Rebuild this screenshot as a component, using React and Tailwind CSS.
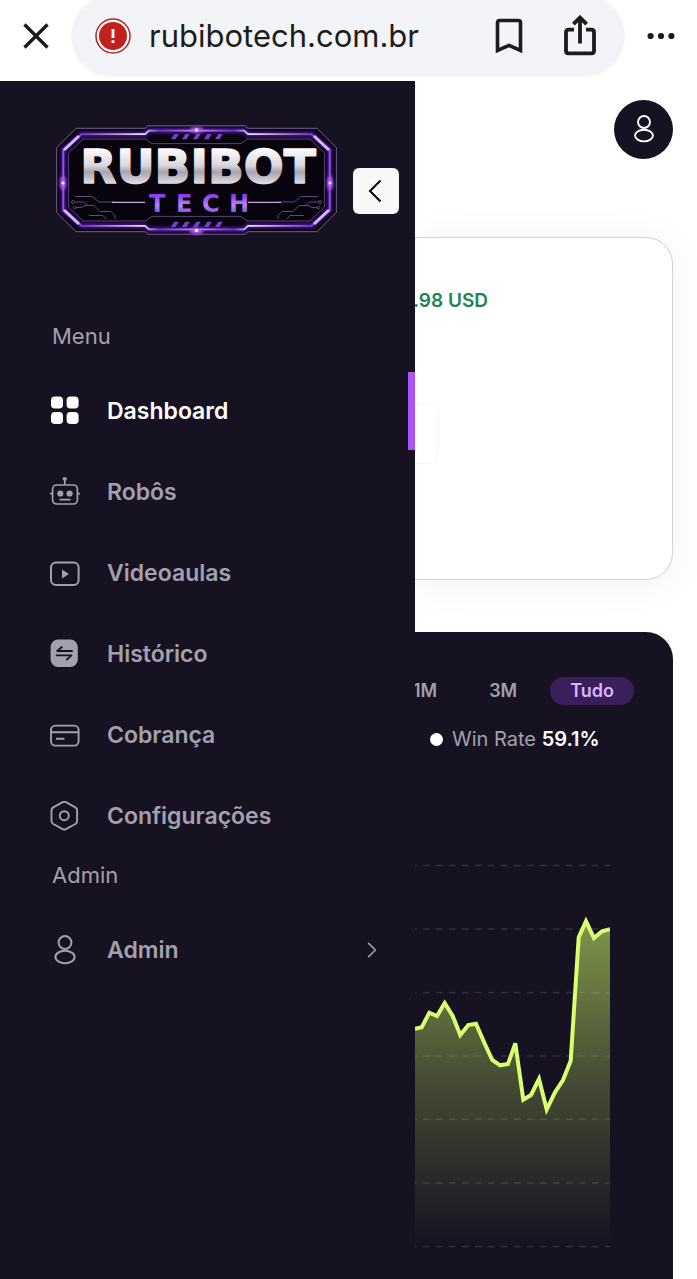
import React from "react";

const ICON = "h-[30px] w-[30px] shrink-0";

function UserIcon({ className }) {
  return (
    <svg viewBox="0 0 30 30" className={className} fill="none" stroke="currentColor" strokeWidth="2" aria-hidden="true">
      <circle cx="15" cy="7.5" r="6.4" />
      <ellipse cx="15" cy="22" rx="9.6" ry="6.2" />
    </svg>
  );
}

function DashboardIcon() {
  return (
    <svg viewBox="0 0 30 30" className={ICON} fill="currentColor" aria-hidden="true">
      <rect x="1" y="0.5" width="12" height="12" rx="3.8" />
      <rect x="16.6" y="0.5" width="12" height="12" rx="3.8" />
      <rect x="1" y="16" width="12" height="12" rx="3.8" />
      <rect x="16.6" y="16" width="12" height="12" rx="3.8" />
    </svg>
  );
}

function RobotIcon() {
  return (
    <svg viewBox="0 0 30 30" className={ICON} fill="none" stroke="currentColor" strokeWidth="1.7" aria-hidden="true">
      <rect x="2.6" y="8" width="24.8" height="19" rx="4" />
      <path d="M14.8 8V2M0 16.6h2.200M27.700 16.600h2.200M9.500 22.600h11" />
      <rect x="12.8" y="0.2" width="4" height="3.4" rx="1" fill="currentColor" stroke="none" />
      <circle cx="10.3" cy="16.500" r="3.100" fill="currentColor" stroke="none" />
      <circle cx="19.6" cy="16.500" r="3.100" fill="currentColor" stroke="none" />
    </svg>
  );
}

function VideoIcon() {
  return (
    <svg viewBox="0 0 30 30" className={ICON} fill="none" stroke="currentColor" strokeWidth="2" aria-hidden="true">
      <rect x="1" y="4.600" width="27.6" height="22.4" rx="5" />
      <path d="M12 11.400v9l7-4.500z" fill="currentColor" stroke="none" />
    </svg>
  );
}

function HistoryIcon() {
  return (
    <svg viewBox="0 0 30 30" className={ICON} fill="none" aria-hidden="true">
      <rect x="0.6" y="0.500" width="27.2" height="27.4" rx="7.4" fill="currentColor" />
      <path d="M22 12H7.200l4.600-4M6.600 16.400h14.800l-4.600 4.200" stroke="#171222" strokeWidth="1.9" strokeLinecap="round" strokeLinejoin="round" />
    </svg>
  );
}

function CardIcon() {
  return (
    <svg viewBox="0 0 30 30" className={ICON} fill="none" stroke="currentColor" strokeWidth="1.9" aria-hidden="true">
      <rect x="1" y="5.600" width="27.6" height="20" rx="4.4" />
      <path d="M1 12.200h27.600M6 18.800h8.400" />
    </svg>
  );
}

function SettingsIcon() {
  return (
    <svg viewBox="0 0 30 30" className={ICON} fill="none" stroke="currentColor" strokeWidth="1.9" strokeLinejoin="round" aria-hidden="true">
      <path d="M12.700 1.200q1.600-.9 3.200 0l9.500 5.200q1.700 1 1.700 2.900v10.800q0 1.900-1.700 2.900l-9.500 5.200q-1.600.9-3.200 0l-9.500-5.200q-1.700-1-1.700-2.900V9.300q0-1.900 1.700-2.900z" />
      <circle cx="14.3" cy="14.700" r="4.5" />
    </svg>
  );
}

const menu = [
  { label: "Dashboard", icon: <DashboardIcon />, active: true },
  { label: "Robôs", icon: <RobotIcon /> },
  { label: "Videoaulas", icon: <VideoIcon /> },
  { label: "Histórico", icon: <HistoryIcon /> },
  { label: "Cobrança", icon: <CardIcon /> },
  { label: "Configurações", icon: <SettingsIcon /> },
];

function NavItem({ label, icon, active, expandable }) {
  return (
    <li>
      <a
        href="#"
        className={
          "flex h-[78px] items-center gap-[27px] pl-[50px] text-[23px] leading-9 font-semibold " +
          (active ? "border-r-[7px] border-[#a855f7] text-white" : "text-[#a3a0ae]")
        }
      >
        {icon}
        <span className="flex-1">{label}</span>
        {expandable && (
          <svg viewBox="0 0 10 16" className="mr-[38px] h-4 w-[10px]" fill="none" stroke="currentColor" strokeWidth="1.6" strokeLinecap="round" strokeLinejoin="round" aria-hidden="true">
            <path d="M1.6 1.4 8.4 8l-6.8 6.6" />
          </svg>
        )}
      </a>
    </li>
  );
}

function Corner() {
  return (
    <g fill="none">
      <path d="M4.7 58V25.7L24 6.3h69l3-2.5h48.5" stroke="#6f618c" strokeWidth="1" />
      <path d="M11.3 58V28L29.5 12.2H93l4-3.6h47.5" stroke="#7c22ff" strokeWidth="5" opacity="0.55" filter="url(#glow)" />
      <path d="M11.3 58V28L29.5 12.2H93l4-3.6h47.5" stroke="url(#frame)" strokeWidth="1.8" />
      <path d="M12 28 27 14" stroke="#d9b4ff" strokeWidth="3" />
      <path d="M16.6 58V31L31 17h63l6 4.6h44.5" stroke="#57457a" strokeWidth="1" />
    </g>
  );
}

function Circuit() {
  return (
    <g fill="none" stroke="#5b4a7e" strokeWidth="1">
      <path d="M23 74.5h17l7 5.5h16M24 85.5h5l4-2h9l6 6h11l4 4v3.5M37 93.5h14l3 3.5M22.5 80h9l4 3.5" />
      <circle cx="21" cy="80" r="1.5" />
      <circle cx="22.6" cy="85.6" r="1.4" />
      <path d="M60 80.3h33" stroke="#c4a5e8" strokeWidth="1.2" />
    </g>
  );
}

function Logo() {
  return (
    <svg viewBox="0 0 288 116" className="h-[116px] w-[288px] shrink-0" role="img" aria-label="Rubibot Tech">
      <defs>
        <linearGradient id="frame" gradientUnits="userSpaceOnUse" x1="11" y1="0" x2="144.5" y2="0">
          <stop offset="0" stopColor="#9a50f0" />
          <stop offset="0.16" stopColor="#7a3acc" />
          <stop offset="0.35" stopColor="#9f8bb5" />
          <stop offset="0.6" stopColor="#f2e4ff" />
          <stop offset="0.72" stopColor="#6f30bd" />
          <stop offset="1" stopColor="#cf8cff" />
        </linearGradient>
        <linearGradient id="silver" x1="0" y1="0" x2="0" y2="1">
          <stop offset="0.15" stopColor="#ffffff" />
          <stop offset="0.48" stopColor="#dad7de" />
          <stop offset="0.6" stopColor="#a8a3b0" />
          <stop offset="0.82" stopColor="#e2dfe7" />
        </linearGradient>
        <linearGradient id="violet" x1="0" y1="0" x2="0" y2="1">
          <stop offset="0.2" stopColor="#8b3ff0" />
          <stop offset="0.55" stopColor="#b485ee" />
          <stop offset="0.85" stopColor="#8746e0" />
        </linearGradient>
        <filter id="glow" x="-30%" y="-30%" width="160%" height="160%">
          <feGaussianBlur stdDeviation="1.8" />
        </filter>
      </defs>
      <path d="M5 26 24 7h70l3-3h95l3 3h70l19 19v64l-19 19h-70l-3 3H97l-3-3H24L5 90z" fill="#07040d" />
      <Corner />
      <g transform="matrix(-1 0 0 1 289 0)"><Corner /></g>
      <g transform="matrix(1 0 0 -1 0 116)"><Corner /></g>
      <g transform="matrix(-1 0 0 -1 289 116)"><Corner /></g>
      <g fill="#7440cc">
        {[119, 130, 141, 152, 163].map((x) => (
          <React.Fragment key={x}>
            <path d={`M${x} 17.2l3.2-5.2h4.6l-3.2 5.2z`} />
            <path d={`M${x} 105l3.2-5.2h4.6l-3.2 5.2z`} />
          </React.Fragment>
        ))}
      </g>
      <Circuit />
      <g transform="matrix(-1 0 0 1 289 0)"><Circuit /></g>
      <g fill="#b45cff" filter="url(#glow)">
        <ellipse cx="144.5" cy="8" rx="7" ry="3" />
        <ellipse cx="144.5" cy="109" rx="7" ry="3" />
        <ellipse cx="11" cy="61" rx="3" ry="7" />
        <ellipse cx="278" cy="61" rx="3" ry="7" />
      </g>
      <g fill="#f8e8ff">
        <circle cx="144.5" cy="8" r="1.8" />
        <circle cx="144.5" cy="108.5" r="1.8" />
        <circle cx="11" cy="61" r="1.6" />
        <circle cx="278" cy="61" r="1.6" />
      </g>
      <text x="146" y="61" textAnchor="middle" fill="url(#silver)" stroke="url(#silver)" strokeWidth="1.6" strokeLinejoin="round" className="font-['DejaVu_Sans',sans-serif] text-[47px] font-bold">RUBIBOT</text>
      <text x="97 124 150 177" y="90" fill="url(#violet)" className="font-['DejaVu_Sans',sans-serif] text-[24px] font-bold">TECH</text>
    </svg>
  );
}

const points =
  "0,173.7 6.7,172.3 14.3,157.7 22,161 29.7,148 37.7,161 45.3,180 53.3,170 61,168.7 69.3,187.7 77.3,205 85,210.3 93,209 100.3,188.3 108.3,244.7 116,240 124,224 131.7,254.5 140,237.3 148,225 155.7,205.7 163.7,82.3 171,66.3 179,83 187,76.3 195,74.3";

function Chart() {
  return (
    <svg viewBox="0 0 195 402" preserveAspectRatio="none" className="h-[402px] w-full" role="img" aria-label="Equity">
      <defs>
        <linearGradient id="area" gradientUnits="userSpaceOnUse" x1="0" y1="64" x2="0" y2="391">
          <stop offset="0" stopColor="#d4ff6a" stopOpacity="0.56" />
          <stop offset="0.5" stopColor="#d4ff6a" stopOpacity="0.24" />
          <stop offset="1" stopColor="#d4ff6a" stopOpacity="0" />
        </linearGradient>
      </defs>
      <g stroke="#ffffff" strokeOpacity="0.13" strokeWidth="1.4" strokeDasharray="6.5 6.5">
        {[10.5, 74, 137.5, 201, 264.3, 328, 391.5].map((y) => (
          <path key={y} d={`M-5 ${y}H195`} />
        ))}
      </g>
      <polygon points={`${points} 195,391 0,391`} fill="url(#area)" />
      <polyline points={points} fill="none" stroke="#d7ff70" strokeWidth="4" />
    </svg>
  );
}

function BrowserBar() {
  return (
    <header className="flex h-[81px] items-start overflow-hidden bg-white text-[#1c1c1e]">
      <button type="button" aria-label="Fechar" className="flex h-[72px] w-[71px] items-center justify-center">
        <svg viewBox="0 0 26 26" className="h-[26px] w-[26px]" stroke="currentColor" strokeWidth="3.4" aria-hidden="true">
          <path d="M1.5 1.5l23 23M24.5 1.5l-23 23" />
        </svg>
      </button>
      <div className="-mt-[5px] flex h-[82px] min-w-0 flex-1 items-center rounded-full bg-[#f3f4f7] pr-[29px] pl-6">
        <svg viewBox="0 0 36 36" className="h-9 w-9 shrink-0" aria-hidden="true">
          <circle cx="18" cy="18" r="17" fill="#fff" stroke="#b9282a" strokeWidth="1.5" />
          <circle cx="18" cy="18" r="14" fill="#c1201d" />
          <path d="M18 11v9M18 22.3v2.8" stroke="#fff" strokeWidth="2.8" />
        </svg>
        <input
          aria-label="Endereço"
          readOnly
          value="rubibotech.com.br"
          className="ml-[18px] min-w-0 flex-1 bg-transparent text-[31px] leading-10 outline-none"
        />
        <button type="button" aria-label="Favoritos">
          <svg viewBox="0 0 28 36" className="h-9 w-7" fill="none" stroke="currentColor" strokeWidth="3.6" aria-hidden="true">
            <path d="M2.5 32.4V4.8Q2.5 2.5 4.8 2.5h18.4q2.3 0 2.3 2.3v27.6L14 27.4z" />
          </svg>
        </button>
        <button type="button" aria-label="Compartilhar" className="ml-[41px]">
          <svg viewBox="0 0 32 42" className="h-[42px] w-8" fill="none" stroke="currentColor" strokeWidth="3.8" aria-hidden="true">
            <path d="M10 14.6H4.6q-2.600 0-2.600 2.600v18.600q0 2.600 2.600 2.600h22.800q2.600 0 2.600-2.600V17.200q0-2.600-2.600-2.600H22" />
            <path d="M16 28.500V3M9.400 9.200 16 2.600l6.600 6.600" />
          </svg>
        </button>
      </div>
      <button type="button" aria-label="Mais opções" className="flex h-[72px] w-[72px] items-center justify-center">
        <svg viewBox="0 0 28 8" className="h-2 w-7" fill="currentColor" aria-hidden="true">
          <circle cx="3.6" cy="4" r="3.1" />
          <circle cx="14" cy="4" r="3.1" />
          <circle cx="24.4" cy="4" r="3.1" />
        </svg>
      </button>
    </header>
  );
}

export default function App() {
  return (
    <div className="flex min-h-screen flex-col bg-white font-['Inter',sans-serif]">
      <BrowserBar />
      <div className="flex flex-1">
        <aside className="z-10 w-[415px] shrink-0 bg-[#171222] pt-[41px]">
          <div className="flex items-end gap-[13px] pl-[52px]">
            <Logo />
            <button type="button" aria-label="Recolher menu" className="mb-6 flex h-[46px] w-[46px] items-center justify-center rounded-md bg-[#f8f8f8] text-black">
              <svg viewBox="0 0 14 24" className="mr-[2px] h-6 w-[14px]" fill="none" stroke="currentColor" strokeWidth="2" aria-hidden="true">
                <path d="M12.5 1.5 2 12l10.5 10.5" />
              </svg>
            </button>
          </div>
          <nav className="mt-20">
            <h2 className="mb-[18px] pl-[52px] text-[22px] leading-9 font-normal text-[#a3a0ae]">Menu</h2>
            <ul className="flex flex-col gap-[3px]">
              {menu.map((item) => (
                <NavItem key={item.label} {...item} />
              ))}
            </ul>
            <h2 className="mt-[2px] mb-[18px] pl-[52px] text-[22px] leading-9 font-normal text-[#a3a0ae]">Admin</h2>
            <ul>
              <NavItem label="Admin" icon={<UserIcon className={ICON} />} expandable />
            </ul>
          </nav>
        </aside>

        <main className="flex min-w-0 flex-1 flex-col overflow-hidden pt-[19px] pr-6">
          <button type="button" aria-label="Perfil" className="flex h-[59px] w-[59px] shrink-0 items-center justify-center self-end rounded-full bg-[#171222] pb-[2px] text-white">
            <UserIcon className="h-7 w-7" />
          </button>

          <section className="mt-[78px] h-[343px] rounded-r-[27px] border border-l-0 border-[#d3d3d5] bg-white pt-[49px] shadow-[0_4px_40px_rgba(0,0,0,0.06)]">
            <p className="flex w-[73px] justify-end overflow-hidden text-[19px] leading-7 font-semibold whitespace-nowrap text-[#1f8552]">.98 USD</p>
            <div className="mt-[88px] h-[61px] w-6 rounded-r-xl border border-l-0 border-[#f5f5f5]" />
          </section>

          <section className="mt-[52px] flex-1 rounded-tr-[27px] bg-[#171222] pt-[45px] pb-[22px]">
            <div className="flex justify-end gap-[14px] pr-[39px] text-[18px] leading-7 font-semibold text-[#a3a0ae]">
              <button type="button" className="rounded-full px-[19px]">1M</button>
              <button type="button" className="rounded-full px-[19px]">3M</button>
              <button type="button" className="rounded-full bg-[#3b1f5b] px-5 text-[#d8b4fe]">Tudo</button>
            </div>
            <p className="mt-5 flex items-center gap-[9px] pl-[15px] text-[20px] leading-7 whitespace-nowrap text-[#a3a0ae]">
              <span className="h-[13px] w-[13px] shrink-0 rounded-full bg-white" />
              <span>
                Win Rate <strong className="font-semibold text-white">59.1%</strong>
              </span>
            </p>
            <div className="mt-[102px] pr-[63px]">
              <Chart />
            </div>
          </section>
        </main>
      </div>
    </div>
  );
}
